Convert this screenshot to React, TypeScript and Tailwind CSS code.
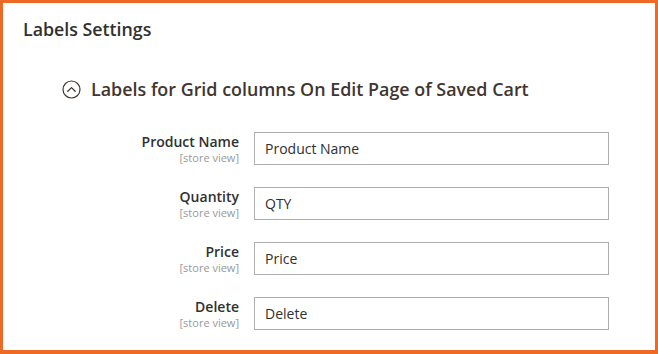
const rows = [
  { label: "Product Name", value: "Product Name" },
  { label: "Quantity", value: "QTY" },
  { label: "Price", value: "Price" },
  { label: "Delete", value: "Delete" },
];

function CollapseIcon() {
  return (
    <svg width="19" height="19" viewBox="0 0 19 19" fill="none" className="shrink-0">
      <circle cx="9.5" cy="9.5" r="8.5" stroke="#41362f" strokeWidth="1.2" />
      <path d="M5.8 11.2 L9.5 7.6 L13.2 11.2" stroke="#41362f" strokeWidth="1.3" strokeLinecap="round" strokeLinejoin="round" />
    </svg>
  );
}

export default function App() {
  return (
    <div className="w-[658px] h-[354px] box-border border-[3px] border-b-4 border-[#ee6a24] bg-white font-['Open_Sans',sans-serif] text-[#303030] overflow-hidden">
      <h2 className="pl-5 pt-[15px] text-[17.8px] font-semibold leading-[22px]">Labels Settings</h2>

      <div className="pl-[59px] pt-[37px] flex items-center gap-[10px]">
        <CollapseIcon />
        <h3 className="text-[17.9px] font-semibold leading-6 text-[#41362f]">
          Labels for Grid columns On Edit Page of Saved Cart
        </h3>
      </div>

      <div className="pt-[31px] flex flex-col gap-[22px]">
        {rows.map((r) => (
          <div key={r.label} className="flex items-start">
            <div className="w-[236px] text-right">
              <div className="text-[14px] font-semibold leading-[19px]">{r.label}</div>
              <div className="text-[11px] leading-[13px] text-[#999]">[store view]</div>
            </div>
            <div className="ml-[15px] w-[355px] h-[33px] border border-[#adadad] flex items-center px-[10px] text-[14px]">
              {r.value}
            </div>
          </div>
        ))}
      </div>
    </div>
  );
}
